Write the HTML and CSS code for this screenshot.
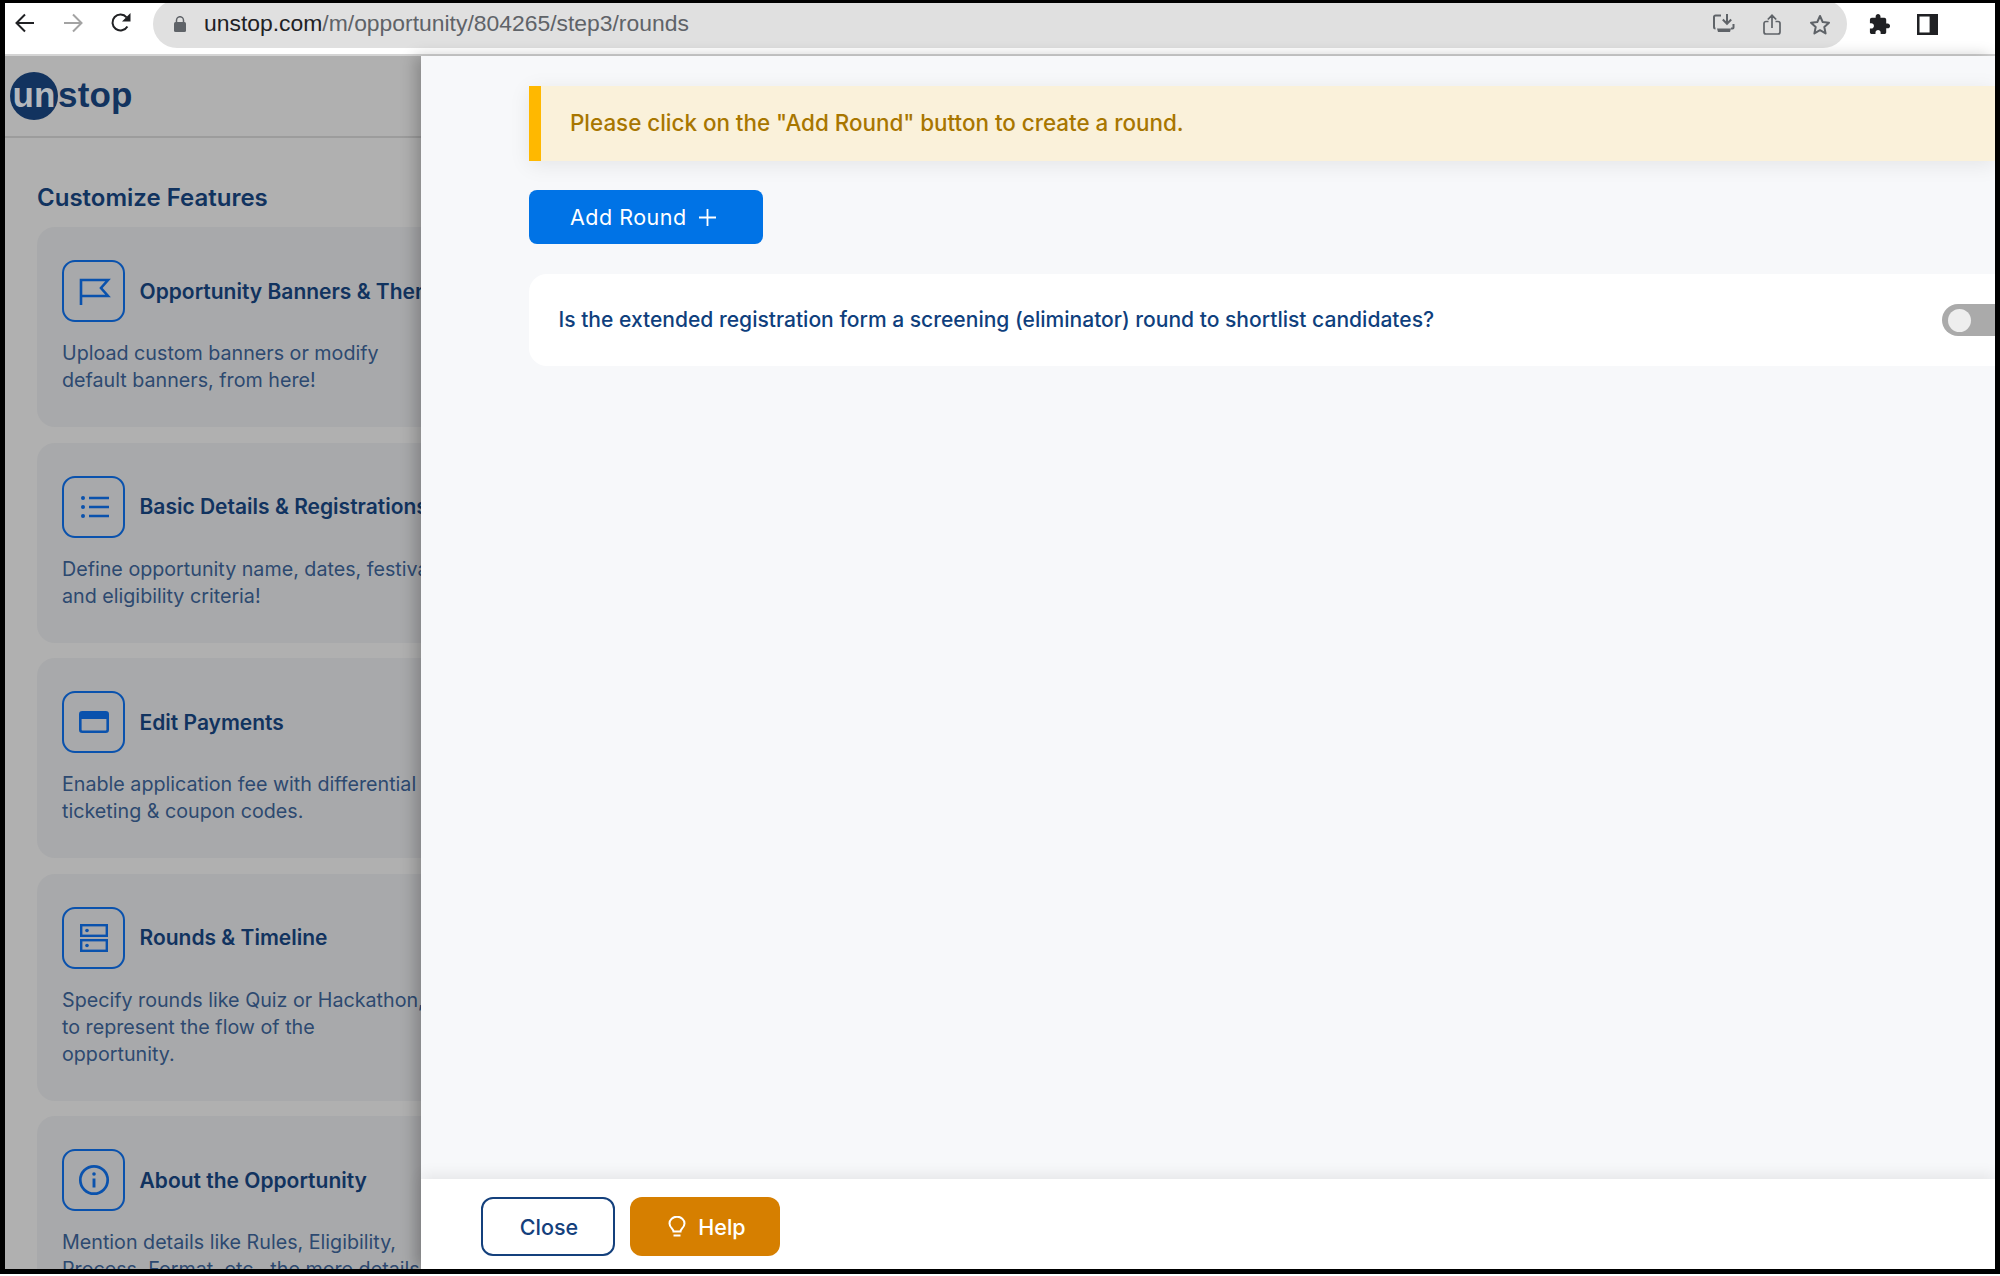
FILE: index.html
```html
<!DOCTYPE html>
<html lang="en">
<head>
<meta charset="utf-8">
<title>Unstop - Rounds</title>
<link rel="stylesheet" href="styles.css">
</head>
<body>
<div class="frame">
  <header class="toolbar">
    <div class="nav">
      <svg class="nav-icon" viewBox="0 0 20 20"><path d="M19 10H2M10 1.500 1.500 10l8.500 8.500" fill="none" stroke="#202124" stroke-width="2"/></svg>
      <svg class="nav-icon" viewBox="0 0 20 20"><path d="M1 10h17M10 1.500 18.500 10 10 18.500" fill="none" stroke="#a3a3a3" stroke-width="2"/></svg>
      <svg class="nav-icon" viewBox="0 0 20 20"><path d="M16.400 13.500A8 8 0 1 1 15.600 4.300" fill="none" stroke="#202124" stroke-width="2"/><path d="M19.500 0v8.500h-8.500z" fill="#202124"/></svg>
    </div>
    <div class="omnibox">
      <svg class="lock" viewBox="0 0 12 16"><path d="M2.500 6V4.200a3.500 3.500 0 0 1 7 0V6" fill="none" stroke="#5f6368" stroke-width="1.500"/><rect y="6" width="12" height="10" rx="1.500" fill="#5f6368"/></svg>
      <span class="url"><span class="host">unstop.com</span>/m/opportunity/804265/step3/rounds</span>
      <div class="omni-actions">
        <svg class="omni-icon" viewBox="0 0 22 20"><path d="M8 1.500H2.500a1.500 1.500 0 0 0-1.500 1.500v10a1.500 1.500 0 0 0 1.500 1.500M20.500 10v3.500a1 1 0 0 1-1 1H18M14 0v9M9.800 5.500 14 9.800l4.200-4.300" fill="none" stroke="#5f6368" stroke-width="2"/><path d="M4 14.500h14l-1 3.500H5z" fill="#5f6368"/></svg>
        <svg class="omni-icon share" viewBox="0 0 18 21"><path d="M5.500 7.500H3a2 2 0 0 0-2 2V18a2 2 0 0 0 2 2h12a2 2 0 0 0 2-2V9.500a2 2 0 0 0-2-2h-2.500M9 14V1.500M4.800 5.500 9 1.300l4.200 4.200" fill="none" stroke="#5f6368" stroke-width="1.700"/></svg>
        <svg class="omni-icon star" viewBox="0 0 22 21"><path d="m11 2 2.700 6 6.300.7-4.700 4.300 1.300 6.400L11 16.200l-5.600 3.200 1.300-6.400L2 8.700 8.300 8z" fill="none" stroke="#5f6368" stroke-width="2" stroke-linejoin="round"/></svg>
      </div>
    </div>
    <div class="extensions">
      <svg class="ext-puzzle" viewBox="0 0 24 24"><path d="M20.500 11H19V7c0-1.100-.9-2-2-2h-4V3.500C13 2.120 11.880 1 10.500 1S8 2.120 8 3.500V5H4c-1.100 0-1.990.9-1.990 2v3.800H3.500c1.490 0 2.700 1.210 2.700 2.700s-1.210 2.700-2.700 2.700H2V20c0 1.100.9 2 2 2h3.800v-1.500c0-1.490 1.210-2.700 2.700-2.700 1.490 0 2.700 1.210 2.700 2.700V22H17c1.100 0 2-.9 2-2v-4h1.500c1.380 0 2.500-1.120 2.500-2.500S21.880 11 20.500 11z" fill="#202124"/></svg>
      <svg class="ext-panel" viewBox="0 0 20 20"><rect x="1.200" y="1.200" width="17.600" height="17.600" fill="#fff" stroke="#202124" stroke-width="2.400"/><rect x="12" y="1" width="7" height="18" fill="#202124"/></svg>
    </div>
  </header>

  <div class="workspace">
    <aside class="sidebar">
      <div class="brand">
        <span class="brand-mark">un</span><span class="brand-rest">stop</span>
      </div>
      <h2 class="side-heading">Customize Features</h2>
      <div class="feature-list">
        <section class="feature">
          <div class="feature-head">
            <span class="feature-icon"><svg viewBox="0 0 36 36"><path d="M5 32V7h27l-7 8 7 8H5" fill="none" stroke="currentColor" stroke-width="2.600"/></svg></span>
            <h3 class="feature-title">Opportunity Banners &amp; Themes</h3>
          </div>
          <p class="feature-text">Upload custom banners or modify<br>default banners, from here!</p>
        </section>
        <section class="feature">
          <div class="feature-head">
            <span class="feature-icon"><svg viewBox="0 0 36 36"><path d="M13 9h20M13 18h20M13 27h20" stroke="currentColor" stroke-width="2.700"/><circle cx="7" cy="9" r="2" fill="currentColor"/><circle cx="7" cy="18" r="2" fill="currentColor"/><circle cx="7" cy="27" r="2" fill="currentColor"/></svg></span>
            <h3 class="feature-title">Basic Details &amp; Registrations</h3>
          </div>
          <p class="feature-text">Define opportunity name, dates, festival<br>and eligibility criteria!</p>
        </section>
        <section class="feature">
          <div class="feature-head">
            <span class="feature-icon"><svg viewBox="0 0 36 36"><rect x="4.300" y="8.300" width="27.400" height="19.400" rx="2" fill="none" stroke="currentColor" stroke-width="2.600"/><rect x="4" y="8" width="28" height="7" fill="currentColor"/></svg></span>
            <h3 class="feature-title">Edit Payments</h3>
          </div>
          <p class="feature-text">Enable application fee with differential<br>ticketing &amp; coupon codes.</p>
        </section>
        <section class="feature">
          <div class="feature-head">
            <span class="feature-icon"><svg viewBox="0 0 36 36"><rect x="5.200" y="5.200" width="25.600" height="10.600" fill="none" stroke="currentColor" stroke-width="2.400"/><rect x="5.200" y="20.200" width="25.600" height="10.600" fill="none" stroke="currentColor" stroke-width="2.400"/><circle cx="11" cy="10.500" r="1.800" fill="currentColor"/><circle cx="11" cy="25.500" r="1.800" fill="currentColor"/></svg></span>
            <h3 class="feature-title">Rounds &amp; Timeline</h3>
          </div>
          <p class="feature-text">Specify rounds like Quiz or Hackathon,<br>to represent the flow of the<br>opportunity.</p>
        </section>
        <section class="feature">
          <div class="feature-head">
            <span class="feature-icon"><svg viewBox="0 0 36 36"><circle cx="18" cy="18" r="13.700" fill="none" stroke="currentColor" stroke-width="2.700"/><circle cx="18" cy="12" r="1.800" fill="currentColor"/><path d="M18 16.500v9" stroke="currentColor" stroke-width="2.900"/></svg></span>
            <h3 class="feature-title">About the Opportunity</h3>
          </div>
          <p class="feature-text">Mention details like Rules, Eligibility,<br>Process, Format, etc., the more details</p>
        </section>
      </div>
    </aside>

    <main class="drawer">
      <div class="drawer-body">
        <div class="alert">Please click on the "Add Round" button to create a round.</div>
        <button class="add-round" type="button">Add Round
          <svg class="plus" viewBox="0 0 17 17"><path d="M8.500 0v17M0 8.500h17" stroke="#fff" stroke-width="1.800"/></svg>
        </button>
        <div class="question">
          <span class="question-text">Is the extended registration form a screening (eliminator) round to shortlist candidates?</span>
          <span class="toggle"><span class="knob"></span></span>
        </div>
      </div>
      <footer class="drawer-foot">
        <button class="btn-close" type="button">Close</button>
        <button class="btn-help" type="button">
          <svg class="bulb" viewBox="0 0 18 21"><path d="M5.500 15.500c0-2.500-4-4-4-8a7.500 6.800 0 0 1 15 0c0 4-4 5.500-4 8z" fill="none" stroke="#fff" stroke-width="2"/><path d="M5.500 19.500h7" stroke="#fff" stroke-width="2"/></svg>
          Help
        </button>
      </footer>
    </main>
  </div>
</div>
</body>
</html>
```
FILE: styles.css
```css
* { box-sizing: border-box; }
html, body { margin: 0; padding: 0; background: #fff; }
body { width: 2000px; height: 1276px; overflow: hidden; font-family: Inter, "Liberation Sans", sans-serif; }

.frame {
  width: 2000px;
  height: 1274px;
  border-style: solid;
  border-color: #000;
  border-width: 3px 5px 5px 5px;
  display: flex;
  flex-direction: column;
  overflow: hidden;
  background: #fff;
}

/* browser chrome */
.toolbar {
  height: 53px;
  flex: none;
  display: flex;
  align-items: flex-start;
  border-bottom: 2px solid #d4d4d4;
  background: #fff;
  overflow: hidden;
}
.nav { width: 148px; flex: none; display: flex; gap: 28px; padding: 10px 0 0 10px; }
.nav-icon { width: 20px; height: 20px; display: block; }
.omnibox {
  width: 1694px;
  height: 48px;
  margin-top: -3px;
  flex: none;
  border-radius: 24px;
  background: #e0e0e0;
  display: flex;
  align-items: center;
  padding-left: 21px;
}
.lock { width: 12px; height: 16px; flex: none; margin-right: 18px; }
.url { font-family: "Liberation Sans", Arial, sans-serif; font-size: 22.900px; line-height: 26px; padding-bottom: 2px; color: #5f6368; white-space: nowrap; }
.host { color: #202124; }
.omni-actions { margin-left: auto; display: flex; align-items: center; gap: 28px; padding-right: 16px; }
.omni-icon { width: 22px; height: 20px; display: block; }
.omni-icon.share { width: 18px; height: 21px; }
.omni-icon.star { width: 22px; height: 21px; }
.extensions { display: flex; align-items: center; gap: 26px; padding: 10px 0 0 21px; }
.ext-puzzle { width: 23px; height: 23px; display: block; }
.ext-panel { width: 21px; height: 21px; display: block; }

/* page area */
.workspace { flex: 1; min-height: 0; display: flex; }

.sidebar {
  width: 416px;
  flex: none;
  background: #b0b0b0;
  overflow: hidden;
}
.brand {
  height: 82px;
  border-bottom: 2px solid #9c9c9c;
  display: flex;
  align-items: center;
  padding-left: 5px;
  font-family: "Liberation Sans", Arial, sans-serif;
  font-weight: 700;
  font-size: 35px;
}
.brand-mark {
  width: 48px;
  height: 48px;
  padding-bottom: 2px;
  border-radius: 50%;
  background: #12335f;
  color: #b4b8bd;
  display: flex;
  align-items: center;
  justify-content: center;
}
.brand-rest { color: #12335f; padding-bottom: 3px; letter-spacing: .2px; }
.side-heading {
  margin: 45px 0 15px 32px;
  font-size: 24px;
  line-height: 29px;
  font-weight: 600;
  color: #11335f;
  white-space: nowrap;
}
.feature-list { display: flex; flex-direction: column; gap: 15.500px; padding-left: 32px; }
.feature {
  width: 480px;
  padding: 33px 25px;
  border-radius: 18px;
  background: #a8a9ab;
}
.feature-head { display: flex; align-items: center; gap: 14.500px; margin-bottom: 18px; }
.feature-icon {
  width: 63px;
  height: 62px;
  flex: none;
  border: 2px solid #0a52ad;
  border-radius: 13px;
  color: #0a52ad;
  display: flex;
  align-items: center;
  justify-content: center;
}
.feature-icon svg { width: 36px; height: 36px; display: block; }
.feature-title {
  margin: 0;
  font-size: 21px;
  font-weight: 600;
  color: #11335f;
  white-space: nowrap;
}
.feature-text {
  margin: 0;
  font-size: 19.700px;
  line-height: 27px;
  color: #2d4970;
  white-space: nowrap;
}

/* drawer */
.drawer {
  flex: 1;
  min-width: 0;
  display: flex;
  flex-direction: column;
  position: relative;
  background: #f7f8fa;
  box-shadow: -6px 0 14px rgba(0, 0, 0, .22);
}
.drawer-body { flex: 1; min-height: 0; padding: 30px 0 0 108px; }
.alert {
  height: 75px;
  display: flex;
  align-items: center;
  padding: 0 0 2px 29px;
  border-left: 12px solid #ffb800;
  background: #faf1da;
  color: #a87600;
  font-size: 22.400px;
  font-weight: 500;
  box-shadow: 0 4px 20px rgba(0, 0, 0, .08);
}
.add-round {
  width: 234px;
  height: 54px;
  margin-top: 29px;
  display: flex;
  align-items: center;
  gap: 12px;
  padding: 0 0 0 41px;
  border: 0;
  border-radius: 8px;
  background: #0073e6;
  color: #fff;
  font: 400 21.500px Inter, sans-serif;
  letter-spacing: .5px;
}
.plus { width: 17px; height: 17px; display: block; flex: none; }
.question {
  height: 92px;
  margin-top: 30px;
  padding-left: 29.500px;
  display: flex;
  align-items: center;
  justify-content: space-between;
  border-radius: 18px 0 0 18px;
  background: #fff;
  color: #0f3f7d;
  font-size: 21.050px;
  font-weight: 500;
  overflow: hidden;
}
.question-text { padding-bottom: 1px; }
.toggle {
  width: 53px;
  height: 32px;
  padding-left: 6px;
  display: flex;
  align-items: center;
  border-radius: 16px 0 0 16px;
  background: #aaa;
}
.knob { width: 23px; height: 23px; border-radius: 50%; background: #eee; }

.drawer-foot {
  height: 90px;
  flex: none;
  display: flex;
  align-items: center;
  gap: 15px;
  padding: 5px 0 0 60px;
  background: #fff;
  box-shadow: 0 -4px 14px rgba(0, 0, 0, .08);
  position: relative;
}
.btn-close {
  width: 134px;
  height: 59px;
  padding: 0 0 0 2px;
  border: 2px solid #14407c;
  border-radius: 12px;
  background: #fff;
  color: #14407c;
  font: 500 21.500px Inter, sans-serif;
}
.btn-help {
  width: 150px;
  height: 59px;
  padding: 0 0 0 4px;
  border: 0;
  border-radius: 12px;
  background: #d67f00;
  color: #fff;
  font: 500 21.500px Inter, sans-serif;
  display: flex;
  align-items: center;
  justify-content: center;
  gap: 12px;
}
.bulb { width: 18px; height: 21px; display: block; flex: none; }
```
